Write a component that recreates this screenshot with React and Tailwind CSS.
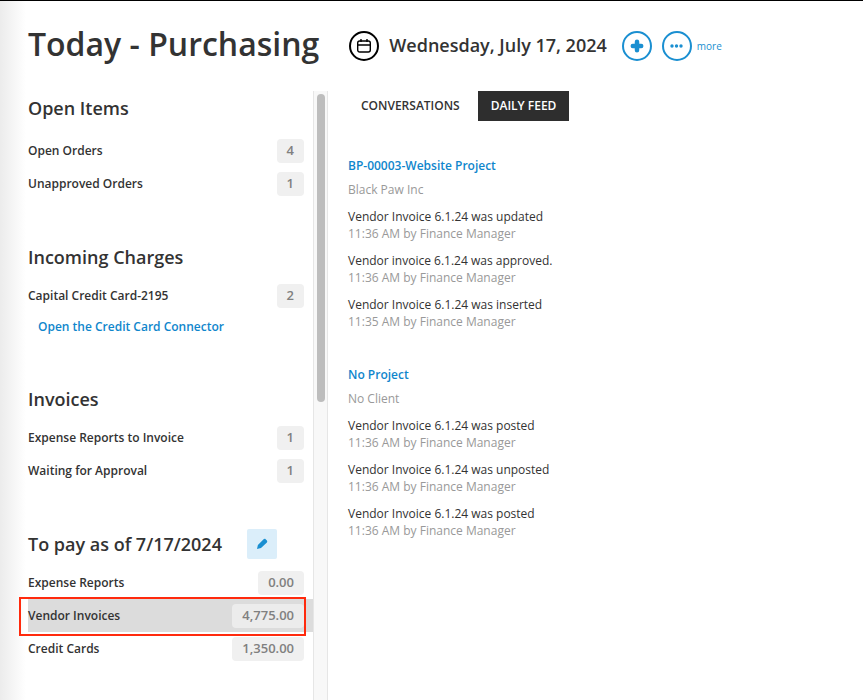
import React from "react";

function Row({ label, value, active }) {
  return (
    <div className={`relative flex h-[33px] items-center justify-between pr-[9px] ${active ? "bg-[#dcdcdc]" : ""}`}>
      <span className="text-[12px] font-semibold text-[#333333]">{label}</span>
      <span className={`flex h-6 min-w-[27px] items-center justify-center rounded-[4px] px-[10px] text-[13px] font-semibold text-[#808080] ${active ? "bg-[#ececec]" : "bg-[#f0f0f0]"}`}>
        {value}
      </span>
      {active && (
        <div className="pointer-events-none absolute left-[-9px] right-[7px] top-[-2px] bottom-[-4px] border-2 border-[#ff2a0d]" />
      )}
    </div>
  );
}

function Heading({ children, className = "" }) {
  return <h2 className={`h-[30px] text-[18px] font-semibold leading-[30px] text-[#333333] ${className}`}>{children}</h2>;
}

function FeedItem({ title, meta }) {
  return (
    <div className="mb-[10px]">
      <div className="h-[17px] text-[12px] leading-[17px] text-[#333333]">{title}</div>
      <div className="h-[17px] text-[12px] leading-[17px] text-[#999999]">{meta}</div>
    </div>
  );
}

function FeedGroup({ project, client, items, className = "" }) {
  return (
    <div className={className}>
      <div className="h-[17px] text-[12px] font-semibold leading-[17px] text-[#0f86cc]">{project}</div>
      <div className="mb-[10px] mt-[7px] h-[17px] text-[12px] leading-[17px] text-[#999999]">{client}</div>
      {items.map((it, i) => (
        <FeedItem key={i} title={it[0]} meta={it[1]} />
      ))}
    </div>
  );
}

export default function App() {
  return (
    <div className="relative flex h-[700px] w-[863px] flex-col overflow-hidden border-t border-black bg-white font-['Open_Sans',sans-serif]">
      <div className="pointer-events-none absolute inset-y-0 left-0 w-[26px] bg-gradient-to-r from-[#ececec] to-white" />
      <header className="relative flex h-[90px] shrink-0 items-center pl-[28px]">
        <h1 className="mb-[4px] text-[32px] font-semibold leading-none text-[#333333]">Today - Purchasing</h1>
        <span className="ml-[30px] flex h-[30px] w-[30px] items-center justify-center rounded-full border-2 border-black">
          <svg width="16" height="16" viewBox="0 0 16 16" fill="none" stroke="#000" strokeWidth="1.4">
            <rect x="1.7" y="3" width="12.6" height="11" rx="2" />
            <path d="M1.7 7h12.6M5 1v3M11 1v3" />
          </svg>
        </span>
        <span className="mb-[2px] ml-[10px] text-[18px] font-semibold text-[#333333]">Wednesday, July 17, 2024</span>
        <span className="ml-[15px] flex h-[30px] w-[30px] items-center justify-center rounded-full border-2 border-[#1a8fd1]">
          <svg width="16" height="16" viewBox="0 0 16 16" fill="none" stroke="#1a8fd1" strokeWidth="4.5" strokeLinecap="round">
            <path d="M8 3.8v8.4M3.8 8h8.4" />
          </svg>
        </span>
        <span className="ml-[10px] flex h-[30px] w-[30px] items-center justify-center rounded-full border-2 border-[#1a8fd1]">
          <svg width="13" height="4" viewBox="0 0 13 4" fill="#1a8fd1">
            <circle cx="2" cy="2" r="1.7" />
            <circle cx="6.5" cy="2" r="1.7" />
            <circle cx="11" cy="2" r="1.7" />
          </svg>
        </span>
        <span className="ml-[5px] text-[10px] text-[#1a8fd1]">more</span>
      </header>

      <div className="relative flex min-h-0 flex-1">
        <aside className="w-[313px] shrink-0 pl-[28px] pt-[2px]">
          <Heading>Open Items</Heading>
          <div className="mt-[11px]">
            <Row label="Open Orders" value="4" />
            <Row label="Unapproved Orders" value="1" />
          </div>
          <Heading className="mt-[42px]">Incoming Charges</Heading>
          <div className="mt-[7px]">
            <Row label="Capital Credit Card-2195" value="2" />
          </div>
          <div className="flex h-[29px] items-center pl-[10px] text-[12px] font-semibold text-[#0f86cc]">Open the Credit Card Connector</div>
          <Heading className="mt-[43px]">Invoices</Heading>
          <div className="mt-[7px]">
            <Row label="Expense Reports to Invoice" value="1" />
            <Row label="Waiting for Approval" value="1" />
          </div>
          <div className="mt-[42px] flex h-[30px] items-center">
            <Heading>To pay as of 7/17/2024</Heading>
            <span className="ml-[25px] flex h-[30px] w-[30px] items-center justify-center rounded-[2px] bg-[#dbeefa]">
              <svg width="12" height="12" viewBox="0 0 12 12" fill="#1a8fd1">
                <path d="M7.6 1.3c.6-.6 1.4-.7 2-.1l1.3 1.3c.5.6.5 1.3 0 1.9L5 10 1 11l.9-4z" />
              </svg>
            </span>
          </div>
          <div className="mt-[7px]">
            <Row label="Expense Reports" value="0.00" />
            <Row label="Vendor Invoices" value="4,775.00" active />
            <Row label="Credit Cards" value="1,350.00" />
          </div>
        </aside>

        <div className="w-[15px] shrink-0 border-x border-[#e6e6e6] bg-[#f8f8f8] pl-[3px] pr-[2px] pt-[3px]">
          <div className="h-[308px] rounded-full bg-[#bdbdbd]" />
        </div>

        <main className="flex-1 pl-[20px]">
          <div className="flex h-[30px] items-center">
            <span className="px-[13px] text-[12px] font-semibold text-[#333333]">CONVERSATIONS</span>
            <span className="ml-[5px] flex h-[30px] items-center bg-[#2e2e2e] px-[13px] text-[12px] font-semibold text-white">DAILY FEED</span>
          </div>
          <FeedGroup
            className="mt-[36px]"
            project="BP-00003-Website Project"
            client="Black Paw Inc"
            items={[
              ["Vendor Invoice 6.1.24 was updated", "11:36 AM by Finance Manager"],
              ["Vendor invoice 6.1.24 was approved.", "11:36 AM by Finance Manager"],
              ["Vendor Invoice 6.1.24 was inserted", "11:35 AM by Finance Manager"],
            ]}
          />
          <FeedGroup
            className="mt-[36px]"
            project="No Project"
            client="No Client"
            items={[
              ["Vendor Invoice 6.1.24 was posted", "11:36 AM by Finance Manager"],
              ["Vendor Invoice 6.1.24 was unposted", "11:36 AM by Finance Manager"],
              ["Vendor Invoice 6.1.24 was posted", "11:36 AM by Finance Manager"],
            ]}
          />
        </main>
      </div>
    </div>
  );
}
